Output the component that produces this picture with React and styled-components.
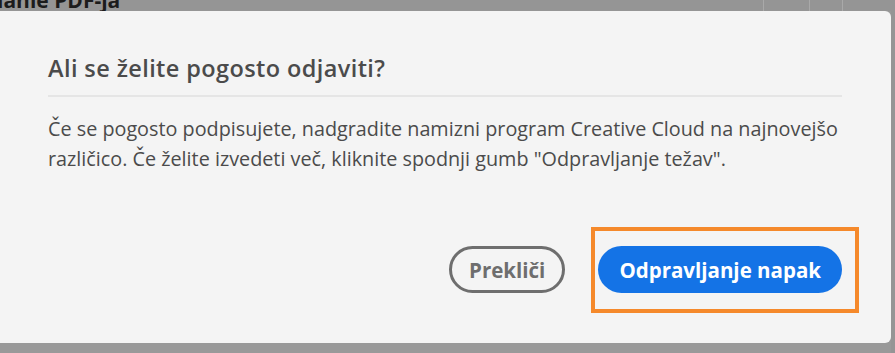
import React from 'react';
import styled, { createGlobalStyle } from 'styled-components';

const GlobalStyle = createGlobalStyle`
  html, body {
    margin: 0;
    padding: 0;
    background: #999999;
  }
  body {
    font-family: "Open Sans", "Noto Sans", sans-serif;
  }
`;

const Page = styled.div`
  width: 895px;
  height: 353px;
  overflow: hidden;
  background: #999999;
  display: flex;
  flex-direction: column;
`;

const BackStrip = styled.div`
  height: 11px;
  overflow: hidden;
  display: flex;
  background: #959595;
`;

const BackTitle = styled.div`
  flex: 1;
  font-family: "Open Sans", sans-serif;
  font-weight: 700;
  font-size: 21px;
  line-height: 20px;
  color: #1c1c1c;
  margin-top: -10px;
  text-indent: -3px;
`;

const BackCell = styled.div`
  width: ${p => p.w}px;
  border-left: 1px solid #a9a9a9;
`;

const Row = styled.div`
  display: flex;
  flex: 1;
`;

const Dialog = styled.div`
  width: 891px;
  height: 332px;
  box-sizing: border-box;
  background: #f4f4f4;
  border-radius: 0 6px 6px 0;
  padding: 41px 46px 0 48px;
  display: flex;
  flex-direction: column;
  color: #4b4b4b;
`;

const SideGap = styled.div`
  flex: 1;
  background: #959595;
`;

const Title = styled.h2`
  margin: 0;
  font-size: 23.5px;
  letter-spacing: 0.4px;
  line-height: 32px;
  font-weight: 600;
  color: #4b4b4b;
`;

const Divider = styled.hr`
  margin: 11px 3px 0 0;
  border: none;
  height: 2px;
  background: #e5e5e5;
`;

const Body = styled.p`
  margin: 17px -10px 0 0;
  font-size: 19.8px;
  line-height: 30px;
  color: #4b4b4b;
`;

const Actions = styled.div`
  display: flex;
  justify-content: flex-end;
  align-items: center;
  gap: 33px;
  margin-top: 72px;
  padding-right: 3px;
`;

const Button = styled.button`
  font-family: "Open Sans", sans-serif;
  font-weight: 700;
  font-size: 20.5px;
  height: 47px;
  border-radius: 24px;
  box-sizing: border-box;
  cursor: pointer;
  padding: 0 ${p => (p.primary ? 21 : 17)}px;
  background: ${p => (p.primary ? '#1473e6' : 'transparent')};
  color: ${p => (p.primary ? '#ffffff' : '#6e6e6e')};
  border: ${p => (p.primary ? 'none' : '3px solid #6e6e6e')};
`;

const Highlight = styled.div`
  position: relative;
  display: flex;

  &::after {
    content: '';
    position: absolute;
    left: -7px;
    right: -17px;
    top: -19px;
    bottom: -20px;
    border: 4px solid #f5892b;
    pointer-events: none;
  }
`;

export default function App() {
  return (
    <>
      <GlobalStyle />
      <Page>
        <BackStrip>
          <BackTitle>lanie PDF-ja</BackTitle>
          <BackCell w={45} />
          <BackCell w={32} />
          <BackCell w={52} />
        </BackStrip>
        <Row>
          <Dialog>
            <Title>Ali se želite pogosto odjaviti?</Title>
            <Divider />
            <Body>
              Če se pogosto podpisujete, nadgradite namizni program Creative Cloud na najnovejšo
              <br />
              različico. Če želite izvedeti več, kliknite spodnji gumb "Odpravljanje težav".
            </Body>
            <Actions>
              <Button>Prekliči</Button>
              <Highlight>
                <Button primary>Odpravljanje napak</Button>
              </Highlight>
            </Actions>
          </Dialog>
          <SideGap />
        </Row>
      </Page>
    </>
  );
}
